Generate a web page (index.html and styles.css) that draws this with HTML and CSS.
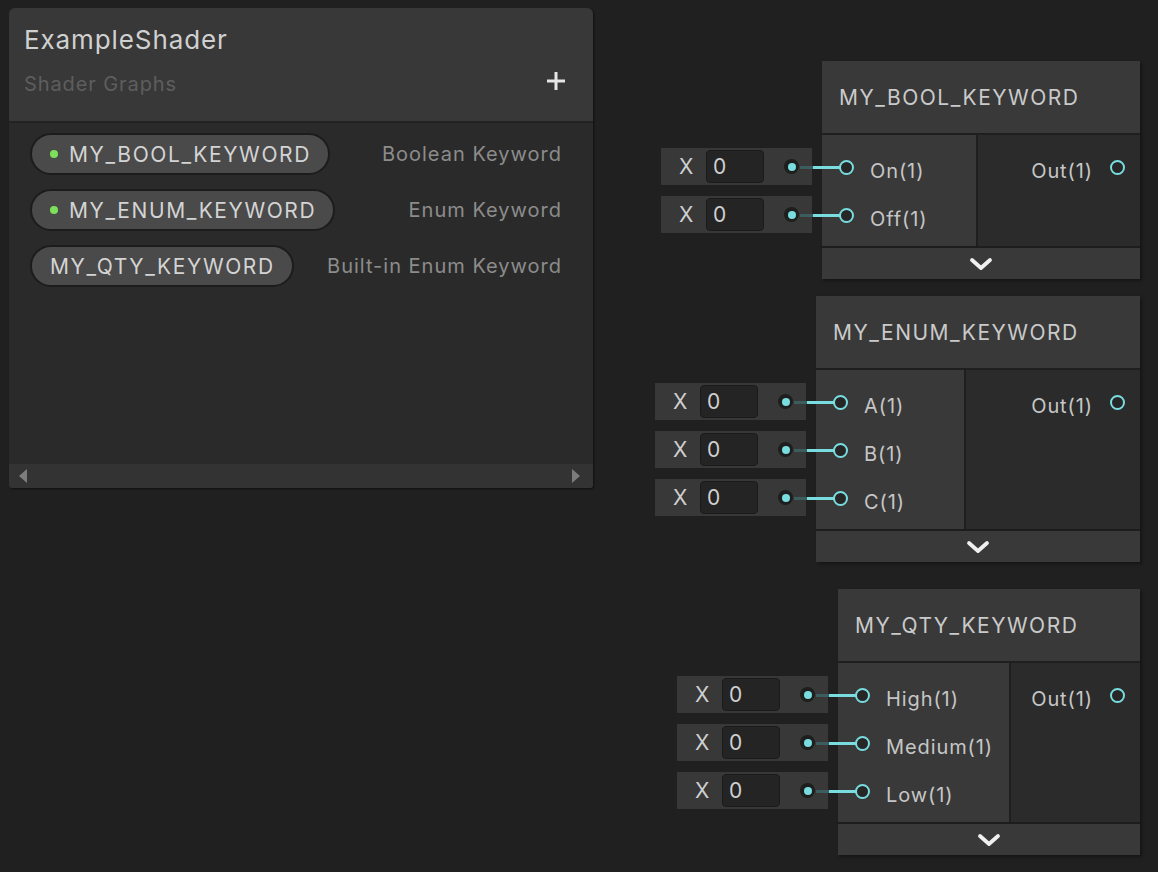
FILE: index.html
```
<!DOCTYPE html>
<html>
<head>
<meta charset="utf-8">
<link rel="stylesheet" href="styles.css">
</head>
<body>
<div class="canvas">

  <div class="blackboard">
    <div class="bb-header">
      <div class="bb-title">ExampleShader</div>
      <div class="bb-subrow">
        <span class="bb-sub">Shader Graphs</span>
        <svg class="bb-add" width="20" height="20" viewBox="0 0 20 20"><path d="M10 1v18M1 10h18" stroke="#e6e6e6" stroke-width="3" fill="none"/></svg>
      </div>
    </div>
    <div class="bb-body">
      <div class="bb-row">
        <span class="pill"><span class="pill-dot"></span>MY_BOOL_KEYWORD</span>
        <span class="bb-type">Boolean Keyword</span>
      </div>
      <div class="bb-row">
        <span class="pill"><span class="pill-dot"></span>MY_ENUM_KEYWORD</span>
        <span class="bb-type">Enum Keyword</span>
      </div>
      <div class="bb-row">
        <span class="pill">MY_QTY_KEYWORD</span>
        <span class="bb-type">Built-in Enum Keyword</span>
      </div>
    </div>
    <div class="bb-scroll">
      <svg width="8" height="14" viewBox="0 0 8 14"><path d="M8 0L0 7L8 14Z" fill="#7c7c7c"/></svg>
      <svg width="8" height="14" viewBox="0 0 8 14"><path d="M0 0L8 7L0 14Z" fill="#7c7c7c"/></svg>
    </div>
  </div>

  <div class="node node-bool">
    <div class="node-title">MY_BOOL_KEYWORD</div>
    <div class="node-body">
      <div class="node-in">
        <div class="port-row">
          <div class="attach"><span class="attach-x">X</span><span class="attach-field">0</span><span class="attach-dot"></span></div>
          <span class="wire-dim"></span><span class="wire"></span>
          <span class="port"></span><span class="port-label">On(1)</span>
        </div>
        <div class="port-row">
          <div class="attach"><span class="attach-x">X</span><span class="attach-field">0</span><span class="attach-dot"></span></div>
          <span class="wire-dim"></span><span class="wire"></span>
          <span class="port"></span><span class="port-label">Off(1)</span>
        </div>
      </div>
      <div class="node-out">
        <div class="out-row"><span class="port-label">Out(1)</span><span class="port"></span></div>
      </div>
    </div>
    <div class="node-footer"><svg width="24" height="16" viewBox="0 0 24 16"><path d="M3 3l9 8l9-8" stroke="#f0f0f0" stroke-width="3.8" fill="none" stroke-linecap="round" stroke-linejoin="round"/></svg></div>
  </div>

  <div class="node node-enum">
    <div class="node-title">MY_ENUM_KEYWORD</div>
    <div class="node-body">
      <div class="node-in">
        <div class="port-row">
          <div class="attach"><span class="attach-x">X</span><span class="attach-field">0</span><span class="attach-dot"></span></div>
          <span class="wire-dim"></span><span class="wire"></span>
          <span class="port"></span><span class="port-label">A(1)</span>
        </div>
        <div class="port-row">
          <div class="attach"><span class="attach-x">X</span><span class="attach-field">0</span><span class="attach-dot"></span></div>
          <span class="wire-dim"></span><span class="wire"></span>
          <span class="port"></span><span class="port-label">B(1)</span>
        </div>
        <div class="port-row">
          <div class="attach"><span class="attach-x">X</span><span class="attach-field">0</span><span class="attach-dot"></span></div>
          <span class="wire-dim"></span><span class="wire"></span>
          <span class="port"></span><span class="port-label">C(1)</span>
        </div>
      </div>
      <div class="node-out">
        <div class="out-row"><span class="port-label">Out(1)</span><span class="port"></span></div>
      </div>
    </div>
    <div class="node-footer"><svg width="24" height="16" viewBox="0 0 24 16"><path d="M3 3l9 8l9-8" stroke="#f0f0f0" stroke-width="3.8" fill="none" stroke-linecap="round" stroke-linejoin="round"/></svg></div>
  </div>

  <div class="node node-qty">
    <div class="node-title">MY_QTY_KEYWORD</div>
    <div class="node-body">
      <div class="node-in">
        <div class="port-row">
          <div class="attach"><span class="attach-x">X</span><span class="attach-field">0</span><span class="attach-dot"></span></div>
          <span class="wire-dim"></span><span class="wire"></span>
          <span class="port"></span><span class="port-label">High(1)</span>
        </div>
        <div class="port-row">
          <div class="attach"><span class="attach-x">X</span><span class="attach-field">0</span><span class="attach-dot"></span></div>
          <span class="wire-dim"></span><span class="wire"></span>
          <span class="port"></span><span class="port-label">Medium(1)</span>
        </div>
        <div class="port-row">
          <div class="attach"><span class="attach-x">X</span><span class="attach-field">0</span><span class="attach-dot"></span></div>
          <span class="wire-dim"></span><span class="wire"></span>
          <span class="port"></span><span class="port-label">Low(1)</span>
        </div>
      </div>
      <div class="node-out">
        <div class="out-row"><span class="port-label">Out(1)</span><span class="port"></span></div>
      </div>
    </div>
    <div class="node-footer"><svg width="24" height="16" viewBox="0 0 24 16"><path d="M3 3l9 8l9-8" stroke="#f0f0f0" stroke-width="3.8" fill="none" stroke-linecap="round" stroke-linejoin="round"/></svg></div>
  </div>

</div>
</body>
</html>
```
FILE: styles.css
```
* { box-sizing: border-box; }
html, body {
  margin: 0;
  padding: 0;
  background: #202020;
  width: 1158px;
  height: 872px;
  overflow: hidden;
  font-family: Inter, "Noto Sans", sans-serif;
}
.canvas {
  position: relative;
  width: 1158px;
  height: 872px;
}

/* Blackboard */
.blackboard {
  position: absolute;
  left: 9px;
  top: 8px;
  width: 584px;
  height: 480px;
  display: flex;
  flex-direction: column;
  border-radius: 6px 6px 3px 3px;
  overflow: hidden;
  background: #2a2a2a;
  box-shadow: 1px 1px 2px rgba(0,0,0,0.5);
}
.bb-header {
  height: 115px;
  background: #383838;
  padding: 14px 24px 0 15px;
  border-bottom: 2px solid #232323;
}
.bb-title {
  font-size: 26px;
  letter-spacing: 0.9px;
  color: #d0d0d0;
  line-height: 36px;
}
.bb-subrow {
  display: flex;
  align-items: center;
  justify-content: space-between;
  margin-top: 12px;
  height: 28px;
}
.bb-sub {
  font-size: 20px;
  letter-spacing: 0.9px;
  color: #5e5e5e;
}
.bb-add { display: block; margin-top: -6px; margin-right: 3px; }
.bb-body {
  flex: 1;
  padding: 10px 31px 0 21px;
  display: flex;
  flex-direction: column;
  gap: 14px;
}
.bb-row {
  display: flex;
  align-items: center;
  justify-content: space-between;
  height: 42px;
}
.pill {
  display: flex;
  align-items: center;
  height: 42px;
  padding: 0 17px 0 18px;
  border-radius: 21px;
  background: #4a4a4a;
  border: 2px solid #1c1c1c;
  color: #d4d4d4;
  font-size: 21px;
  letter-spacing: 1.6px;
}
.pill-dot {
  width: 8px;
  height: 8px;
  border-radius: 50%;
  background: #7ee05a;
  margin-right: 11px;
}
.bb-type {
  font-size: 20px;
  letter-spacing: 1px;
  color: #8c8c8c;
}
.bb-scroll {
  height: 24px;
  background: #333333;
  display: flex;
  align-items: center;
  justify-content: space-between;
  padding: 0 13px 0 10px;
}
.bb-scroll svg { display: block; }

/* Nodes */
.node {
  position: absolute;
  display: flex;
  flex-direction: column;
  background: #1d1d1d;
  box-shadow: 2px 2px 3px rgba(0,0,0,0.35);
}
.node-bool { left: 822px; top: 61px; width: 318px; }
.node-bool .node-in { width: 156px; }
.node-enum { left: 816px; top: 296px; width: 324px; }
.node-enum .node-in { width: 150px; }
.node-qty { left: 838px; top: 589px; width: 302px; }
.node-qty .node-in { width: 173px; }

.node-title {
  height: 74px;
  background: #393939;
  color: #cacaca;
  font-size: 21px;
  letter-spacing: 1.5px;
  display: flex;
  align-items: center;
  padding-left: 17px;
  padding-top: 1px;
  border-bottom: 2px solid #1f1f1f;
}
.node-body {
  display: flex;
}
.node-in {
  background: #393939;
  padding: 8px 0 7px;
  border-right: 2px solid #1f1f1f;
}
.node-out {
  flex: 1;
  background: #2b2b2b;
  padding: 8px 0 7px;
}
.port-row {
  position: relative;
  height: 48px;
  display: flex;
  align-items: center;
  padding-left: 17px;
}
.out-row {
  height: 48px;
  display: flex;
  align-items: center;
  justify-content: flex-end;
  padding-right: 15px;
}
.port {
  width: 15px;
  height: 15px;
  border-radius: 50%;
  border: 2px solid #79dde0;
  background: #262626;
  flex: none;
}
.port-label {
  font-size: 20px;
  letter-spacing: 0.9px;
  color: #c6c6c6;
  margin-left: 16px;
  position: relative;
  top: 4px;
}
.out-row .port-label { margin-left: 0; margin-right: 17px; }

.attach {
  position: absolute;
  right: calc(100% + 10px);
  top: 5px;
  width: 151px;
  height: 37px;
  background: #383838;
  display: flex;
  align-items: center;
  padding-left: 18px;
}
.attach-x {
  font-size: 21px;
  color: #cfcfcf;
  width: 27px;
}
.attach-field {
  width: 58px;
  height: 33px;
  background: #242424;
  border: 1px solid #1a1a1a;
  border-radius: 4px;
  font-size: 21px;
  color: #d0d0d0;
  display: flex;
  align-items: center;
  padding-left: 6px;
}
.attach-dot {
  margin-left: 20px;
  width: 15px;
  height: 15px;
  border-radius: 50%;
  background: #1e1e1e;
  display: flex;
  align-items: center;
  justify-content: center;
}
.attach-dot::after {
  content: "";
  width: 8px;
  height: 8px;
  border-radius: 50%;
  background: #79dde0;
}
.wire-dim {
  position: absolute;
  left: -22px;
  width: 14px;
  height: 3px;
  top: 23px;
  background: #3c5c5e;
}
.wire {
  position: absolute;
  left: -9px;
  width: 28px;
  height: 3px;
  top: 23px;
  background: #79dde0;
}
.node-footer {
  height: 31px;
  margin-top: 2px;
  padding-top: 2px;
  background: #393939;
  display: flex;
  align-items: center;
  justify-content: center;
}
.node-footer svg { display: block; }
```
